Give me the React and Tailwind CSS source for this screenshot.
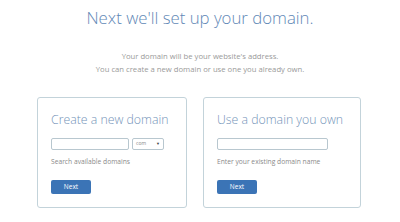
import React from 'react';

const Card = ({ title, width, withSelect, help }) => (
  <div className={`${width} h-[111px] border border-[#c3d3da] rounded-[3px] bg-white pl-[13px] pt-[13px]`}>
    <h2 className="text-[12.3px] leading-[18px] font-light whitespace-nowrap text-[#7393b8]">{title}</h2>
    <div className="flex gap-[3px] mt-[9px]">
      <div className={`${withSelect ? 'w-[78px]' : 'w-[111px]'} h-[12px] border border-[#b8c7cf] rounded-[2px]`} />
      {withSelect && (
        <div className="w-[32px] h-[12px] border border-[#b8c7cf] rounded-[2px] flex items-center justify-between px-[3px]">
          <span className="text-[5px] text-[#888]">com</span>
          <span className="text-[4px] text-[#444]">▼</span>
        </div>
      )}
    </div>
    <p className="mt-[7px] text-[6.7px] leading-[10px] text-[#8a8a8a]">{help}</p>
    <button className="mt-[13px] w-[40px] h-[14px] rounded-[2px] bg-[#3b74b6] text-white text-[6.5px] leading-[14px]">
      Next
    </button>
  </div>
);

export default function App() {
  return (
    <div
      className="w-[400px] h-[222px] bg-white flex flex-col items-center"
      style={{ fontFamily: '"Open Sans", sans-serif' }}
    >
      <h1 className="mt-[6px] text-[16.8px] leading-[24px] font-light text-[#5f88b6]">
        Next we'll set up your domain.
      </h1>
      <div className="mt-[20px] text-center text-[7.7px] leading-[13px] text-[#9a9a9a]">
        <p>Your domain will be your website's address.</p>
        <p>You can create a new domain or use one you already own.</p>
      </div>
      <div className="mt-[21px] flex gap-[16px] ml-[-2px]">
        <Card title="Create a new domain" width="w-[150px]" withSelect help="Search available domains" />
        <Card title="Use a domain you own" width="w-[158px]" help="Enter your existing domain name" />
      </div>
    </div>
  );
}
